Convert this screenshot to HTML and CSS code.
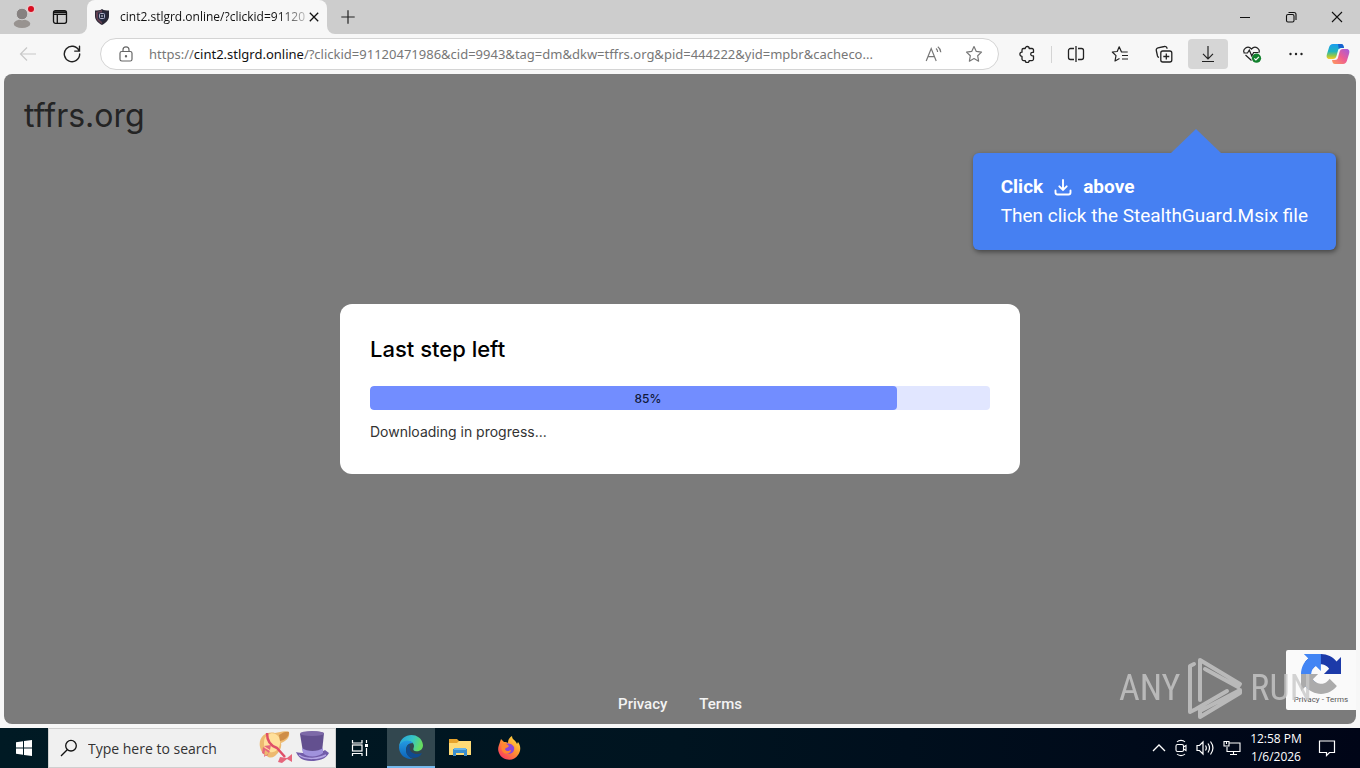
FILE: index.html
```html
<!DOCTYPE html>
<html lang="en">
<head>
<meta charset="utf-8">
<meta name="viewport" content="width=device-width, initial-scale=1">
<title>cint2.stlgrd.online</title>
<link rel="stylesheet" href="styles.css">
</head>
<body class="desktop">
<header class="tabbar">
  <div class="tabbar-tools">
    <button class="icon-button" aria-label="Profile">
      <svg width="28" height="28" viewBox="0 0 28 28"><ellipse cx="14" cy="20.700" rx="8.300" ry="4.300" fill="#989390"/><circle cx="14" cy="11" r="5.800" fill="#868180" stroke="#cdcdcd"/><circle cx="23" cy="6" r="4.500" fill="#e7c9cb"/><circle cx="23" cy="6" r="3" fill="#d80d20"/></svg>
    </button>
    <button class="icon-button" aria-label="Tab actions">
      <svg width="16" height="16" viewBox="0 0 16 16" fill="none" stroke="#111" stroke-width="1.300"><rect x="1.500" y="1.700" width="13" height="12.600" rx="2"/><path d="M1.500 5.300h13M5.300 5v9"/><path d="M2 3.200h12" stroke-width="2"/></svg>
    </button>
  </div>
  <div class="tab">
    <svg class="tab-icon" width="16" height="16" viewBox="0 0 16 16"><path d="M8 0c2 1.500 4.500 1.600 7 1.600V7c0 4-3 7-7 9-4-2-7-5-7-9V1.600C3.500 1.600 6 1.500 8 0z" fill="#292735"/><path d="M2 3l6-2v14C4 13 2 10 2 7z" fill="#634051"/><path d="M4 3.500h8v6L8 13 4 9.500z" fill="#252b43"/><rect x="5.500" y="4.500" width="5" height="5" rx="1" fill="none" stroke="#b0b1c8"/><path d="M8 6v2" stroke="#ddd"/></svg>
    <span class="tab-title">cint2.stlgrd.online/?clickid=91120</span>
    <button class="icon-button tab-close" aria-label="Close tab">
      <svg width="10" height="10" viewBox="0 0 10 10" stroke="#111" stroke-width="1.300"><path d="M.8.8l8.400 8.400M9.200.8L.8 9.200"/></svg>
    </button>
  </div>
  <button class="icon-button new-tab" aria-label="New tab">
    <svg width="14" height="14" viewBox="0 0 14 14" stroke="#222" stroke-width="1.200"><path d="M7 .3v13.400M.3 7h13.400"/></svg>
  </button>
  <div class="window-controls">
    <button class="window-button" aria-label="Minimize"><svg width="12" height="12" viewBox="0 0 12 12" stroke="#111"><path d="M1 6.500h10"/></svg></button>
    <button class="window-button" aria-label="Restore"><svg width="12" height="12" viewBox="0 0 12 12" fill="none" stroke="#111" stroke-width="1.100"><rect x="1.500" y="3.500" width="7.500" height="7.500" rx="1.500"/><path d="M3.500 1.500H9a2 2 0 0 1 2 2V9"/></svg></button>
    <button class="window-button" aria-label="Close"><svg width="12" height="12" viewBox="0 0 12 12" stroke="#111" stroke-width="1.100"><path d="M1 1l10 10M11 1L1 11"/></svg></button>
  </div>
</header>

<nav class="toolbar" aria-label="Browser toolbar">
  <div class="toolbar-nav">
    <button class="icon-button" aria-label="Back" disabled><svg width="18" height="16" viewBox="0 0 18 16" fill="none" stroke="#c8c8c8" stroke-width="1.200"><path d="M17 8H2M8 1.500L1.500 8 8 14.500"/></svg></button>
    <button class="icon-button" aria-label="Refresh"><svg width="18" height="18" viewBox="0 0 18 18" fill="none" stroke="#222" stroke-width="1.400" stroke-linecap="round"><path d="M15.900 5.500A7.700 7.700 0 1 0 16.700 9M16.500 1.300v4.800h-4.800"/></svg></button>
  </div>
  <div class="address">
    <svg class="address-lock" width="14" height="16" viewBox="0 0 14 16" fill="none" stroke="#666" stroke-width="1.200"><rect x="1" y="5.500" width="12" height="9.500" rx="1.800"/><path d="M4 5.500V3.800a3 3 0 0 1 6 0v1.700"/><circle cx="7" cy="10.300" r=".6" fill="#666"/></svg>
    <label class="address-url" for="address">https://<span class="address-host">cint2.stlgrd.online</span>/?clickid=91120471986&amp;cid=9943&amp;tag=dm&amp;dkw=tffrs.org&amp;pid=444222&amp;yid=mpbr&amp;cacheco...</label>
    <input class="address-input" id="address" type="text">
    <button class="icon-button" aria-label="Read aloud"><svg width="18" height="16" viewBox="0 0 18 16" fill="none" stroke="#777" stroke-width="1.200"><path d="M1.200 15L6.200 2.500 11.200 15M2.900 10.700h6.700M11 2.500c1 .8 1.600 2 1.600 3.500M12.800.7c1.800 1.300 2.900 3 3 5.500"/></svg></button>
    <button class="icon-button" aria-label="Add to favorites"><svg width="18" height="18" viewBox="0 0 18 18" fill="none" stroke="#777" stroke-width="1.200" stroke-linejoin="round"><path d="M9 1.500l2.300 4.900 5.200.7-3.800 3.700.9 5.400L9 13.600l-4.600 2.600.9-5.400L1.500 7.100l5.200-.7z"/></svg></button>
  </div>
  <div class="toolbar-actions">
    <button class="tool" aria-label="Extensions"><svg width="18" height="18" viewBox="0 0 18 18" fill="none" stroke="#222" stroke-width="1.300" stroke-linejoin="round"><path d="M7.200 3.500a2 2 0 1 1 4 0H14a1.500 1.500 0 0 1 1.500 1.500v2.300h-1a1.800 1.800 0 0 0 0 3.600h1v3.200A1.500 1.500 0 0 1 14 15.600h-2.800a2 2 0 0 1-4 0H5.500A1.500 1.500 0 0 1 4 14.100v-2.700a2.100 2.100 0 1 1 0-4.200V5a1.500 1.500 0 0 1 1.500-1.500z"/></svg></button>
    <span class="tool-divider"></span>
    <button class="tool" aria-label="Split screen"><svg width="18" height="18" viewBox="0 0 18 18" fill="none" stroke="#222" stroke-width="1.300"><path d="M9 1v16M7 3.500H3.500a2 2 0 0 0-2 2v7a2 2 0 0 0 2 2H7M11 3.500h3.500a2 2 0 0 1 2 2v7a2 2 0 0 1-2 2H11"/></svg></button>
    <button class="tool" aria-label="Favorites"><svg width="18" height="18" viewBox="0 0 18 18" fill="none" stroke="#222" stroke-width="1.200" stroke-linejoin="round"><path d="M16.700 7H10.500L8.200 1.800 6.200 6.500 1.300 7l3.700 3.700-1 5.300 4.500-2.500M11 10.500h6M11 14h6"/></svg></button>
    <button class="tool" aria-label="Collections"><svg width="18" height="18" viewBox="0 0 18 18" fill="none" stroke="#222" stroke-width="1.300"><rect x="5.800" y="6" width="11" height="11" rx="2"/><path d="M11.300 8.500v6M8.300 11.500h6M4 12.500A2.500 2.500 0 0 1 2.500 11L1.300 5.500A2.200 2.200 0 0 1 3 2.800l6.300-1.300A2.200 2.200 0 0 1 12 3.300v.5"/></svg></button>
    <button class="tool tool-active" aria-label="Downloads"><svg width="18" height="18" viewBox="0 0 18 18" fill="none" stroke="#222" stroke-width="1.200"><path d="M9 1v12.500M4 8.800l5 5 5-5M3 16.500h12"/></svg></button>
    <button class="tool" aria-label="Browser essentials"><svg width="20" height="18" viewBox="0 0 20 18" fill="none" stroke="#222" stroke-width="1.200"><path d="M2.300 8C.2 4.600 5.500-.5 9.500 4c4-4.500 9.300.6 7.200 4M3.500 10l6 5.500M1.500 8h4l1.800-3 2.500 6 1.800-3.500H16"/><circle cx="14.500" cy="13.200" r="4.600" fill="#12812d" stroke="none"/><path d="M12.300 13.300l1.600 1.600 3-3" stroke="#fff"/></svg></button>
    <button class="tool" aria-label="Settings and more"><svg width="18" height="18" viewBox="0 0 18 18" fill="#222"><circle cx="3.500" cy="9" r="1.200"/><circle cx="9" cy="9" r="1.200"/><circle cx="14.500" cy="9" r="1.200"/></svg></button>
    <button class="tool tool-copilot" aria-label="Copilot"><svg width="24" height="22" viewBox="0 0 24 22">
      <defs><linearGradient id="cpBlue" x1="0" y1="0" x2="0" y2="1"><stop offset="0" stop-color="#1a9cf0"/><stop offset=".5" stop-color="#22b5bb"/><stop offset=".8" stop-color="#9cc941"/><stop offset="1" stop-color="#ffca2b"/></linearGradient><linearGradient id="cpPink" x1="1" y1="0" x2="0" y2="1"><stop offset="0" stop-color="#a05be0"/><stop offset=".5" stop-color="#ee5d91"/><stop offset="1" stop-color="#ff9c5b"/></linearGradient></defs>
      <path d="M7 1h8c2 0 2.500 1.500 3 4h-3c-2 0-2.600 1-3 2.500L10.500 13c-.6 2-1.500 3-3.500 3H3.500C.5 16 .2 13.500 1 11l2-6.500C3.700 2.200 4.800 1 7 1z" fill="url(#cpBlue)"/><path d="M12 1h3c2 0 2.500 1.500 3 4h-3c-1 0-1.700.3-2.200.9z" fill="#1761cf"/>
      <path d="M17 21H9c-2 0-2.500-1.500-3-4h3c2 0 2.600-1 3-2.500L13.500 9c.6-2 1.500-3 3.500-3h3.500c3 0 3.300 2.500 2.500 5l-2 6.500c-.7 2.300-1.800 3.500-4 3.500z" fill="url(#cpPink)"/></svg></button>
  </div>
</nav>

<main class="viewport">
  <div class="page">
    <h1 class="site-name">tffrs.org</h1>
    <section class="dialog">
      <h2 class="dialog-title">Last step left</h2>
      <div class="progress" role="progressbar" aria-label="Download" aria-valuenow="85" aria-valuemin="0" aria-valuemax="100">
        <div class="progress-fill" style="width:85%">85%</div>
      </div>
      <p class="dialog-status">Downloading in progress...</p>
    </section>
    <footer class="page-footer"><a href="#privacy">Privacy</a><a href="#terms">Terms</a></footer>
    <aside class="callout">
      <p class="callout-head">Click
        <svg width="18" height="18" viewBox="0 0 18 18" fill="none" stroke="#fff" stroke-width="1.900" stroke-linecap="round"><path d="M9 2v9M5.300 8.300L9 12l3.700-3.700M1.500 12.500v2a2 2 0 0 0 2 2h11a2 2 0 0 0 2-2v-2"/></svg>
        above</p>
      <p class="callout-text">Then click the StealthGuard.Msix file</p>
    </aside>
    <aside class="captcha">
      <svg width="40" height="40" viewBox="0 0 64 64"><path d="M64 31.955l-.033-1.370V4.687l-7.160 7.160C50.948 4.674 42.033.093 32.050.093c-10.400 0-19.622 4.960-25.458 12.640l11.736 11.860a15.550 15.550 0 0 1 4.754-5.334c2.050-1.600 4.952-2.906 8.968-2.906.485 0 .86.057 1.135.163 4.976.393 9.288 3.140 11.828 7.124l-8.307 8.307L64 31.953" fill="#1c3aa9"/><path d="M31.862.094l-1.370.033H4.594l7.160 7.160C4.580 13.147 0 22.060 0 32.046c0 10.400 4.960 19.622 12.640 25.458L24.500 45.768a15.550 15.550 0 0 1-5.334-4.754c-1.600-2.050-2.906-4.952-2.906-8.968 0-.485.057-.86.163-1.135.393-4.976 3.140-9.288 7.124-11.828l8.307 8.307L31.860.095" fill="#4285f4"/><path d="M.001 32.045l.033 1.370v25.898l7.160-7.160c5.860 7.173 14.774 11.754 24.760 11.754 10.400 0 19.622-4.960 25.458-12.640l-11.736-11.860a15.550 15.550 0 0 1-4.754 5.334c-2.050 1.600-4.952 2.906-8.968 2.906-.485 0-.86-.057-1.135-.163-4.976-.393-9.288-3.140-11.828-7.124l8.307-8.307c-10.522.04-22.400.066-27.295-.005" fill="#ababab"/></svg>
      <p class="captcha-links"><a href="#rc-privacy">Privacy</a> - <a href="#rc-terms">Terms</a></p>
    </aside>
    <div class="watermark">
      <span>ANY</span>
      <svg width="56" height="64" viewBox="0 0 56 64" fill="none" stroke="currentColor" stroke-width="4" stroke-linejoin="round" stroke-linecap="round"><path d="M7 8l-4 2v46l6-3 31-18M13 44V4l40 24-2 3-33-18M53 34L13 55v6l40-24z"/></svg>
      <span>RUN</span>
    </div>
  </div>
</main>

<footer class="taskbar">
  <button class="task-button" aria-label="Start"><svg width="16" height="16" viewBox="0 0 16 16" fill="#fff"><path d="M0 2.200l7-1v6.300H0zM8 1l8-1v7.500H8zM0 8.500h7v6.300l-7-1zM8 8.500h8V16l-8-1z"/></svg></button>
  <label class="search" for="search">
    <svg width="18" height="18" viewBox="0 0 18 18" fill="none" stroke="#111" stroke-width="1.300"><circle cx="11" cy="6.700" r="5.300"/><path d="M7.200 10.700L1 17"/></svg>
    <input class="search-input" id="search" type="text" placeholder="Type here to search" aria-label="Search">
    <svg width="70" height="36" viewBox="0 0 70 36">
      <path d="M1 17C-1 7 7 1 16 3c5-1 10-3 14-1 1 5-2 9-8 11 1 4-1 9-6 13-3 2-6 2-8 0-4-1-6-5-7-9z" fill="#edba70"/><path d="M9 5c5-4 11 0 12 5s-2 11-7 12-9-2-9-8 1-7 4-9z" fill="#ffe09b"/><path d="M20 5c4-3 8-4 10-3 0 5-4 8-9 9z" fill="#cf8e48"/><path d="M8 3c0 8 4 13 10 15l8 9" fill="none" stroke="#df4f68" stroke-width="2.500"/><path d="M4 17l7 4-3 5-5-3zM11 20l-6-4 7-1zM21 27l7 1 5-4v8l-5-3-5 4-4-1zM6 20l-1 7 5-4z" fill="#e6667c"/>
      <path d="M37 22c6 2 25 1 29-2l4 3c-3 6-10 8-18 8-9 0-13-4-15-9z" fill="#725ca9"/><path d="M41 4c5-3 18-3 24-1l-2 19c-6 5-15 5-19 0z" fill="#63508f"/><path d="M43 18c5 4 16 4 21 0v5c-6 5-17 4-20 0z" fill="#a092dc"/><ellipse cx="53" cy="3.500" rx="12" ry="2.500" fill="#7d69a8"/><path d="M40 25c7 5 20 4 27 0" fill="none" stroke="#b3a4e4" stroke-width="1.500"/>
    </svg>
  </label>
  <button class="task-button" aria-label="Task view"><svg width="18" height="18" viewBox="0 0 18 18" fill="none" stroke="#fff" stroke-width="1.200"><path d="M1.500 1v3h9.500V1M1.500 17v-2.500H11V17M15.500 1v3M15.500 9v8"/><rect x="1.500" y="6" width="9.500" height="6"/><path d="M14 6.500h3" stroke-width="3"/></svg></button>
  <button class="task-button task-active" aria-label="Microsoft Edge"><svg width="24" height="24" viewBox="0 0 24 24">
    <defs><linearGradient id="eg" x1="0" y1="0" x2="1" y2=".3"><stop offset="0" stop-color="#259ee0"/><stop offset=".6" stop-color="#37c6c5"/><stop offset="1" stop-color="#65dc61"/></linearGradient><linearGradient id="eb" x1="0" y1="0" x2="0" y2="1"><stop offset="0" stop-color="#249be3"/><stop offset="1" stop-color="#0c62b8"/></linearGradient></defs>
    <path d="M0 12C1-3 22-4 24 10c0 5-4 7-8 6-3-1-1-3-1-5 0-6-11-7-15 1z" fill="url(#eg)"/><path d="M0 12c1-6 10-9 14-4-5 0-7 3-7 7 0 5 4 8 7 9C6 25 0 19 0 12z" fill="url(#eb)"/><path d="M10 9c-6 6-2 17 9 13 2-1 3-2 4-4-7 3-14-1-12-7z" fill="#104b8f"/></svg></button>
  <button class="task-button" aria-label="File Explorer"><svg width="22" height="20" viewBox="0 0 22 20"><path d="M0 1h8l2 2h12v5H0z" fill="#e7a32b"/><path d="M0 5h8l2-2h12v14H0z" fill="#ffdb76"/><path d="M4 11h14v7h-3v-3H7v3H4z" fill="#3c8fcd"/><path d="M5 10h12v2H5z" fill="#65b3e8"/></svg></button>
  <button class="task-button" aria-label="Firefox"><svg width="24" height="24" viewBox="0 0 24 24">
    <defs><linearGradient id="ff" x1="1" y1="0" x2=".2" y2="1"><stop offset="0" stop-color="#fff04a"/><stop offset=".5" stop-color="#ff962f"/><stop offset="1" stop-color="#fb3562"/></linearGradient></defs>
    <path d="M3 6l1-3 3 3c2 0 3 0 4 1 0-4 2-6 4-7 0 4 4 4 5 8l1-2c3 4 3 9 0 13C17 26 5 25 2 17c-2-4 0-8 1-11z" fill="url(#ff)"/><path d="M8 8c2-1 7-1 9 3 1 4-2 7-5 7-4 0-6-3-5-6l4-1z" fill="#8a46d8"/><path d="M5 8c3-1 5 0 7 2-1 2-3 1-4 3 1 3 4 2 6 1 0 3-4 5-7 3-3-2-3-6-2-9z" fill="#ff8531"/></svg></button>
  <div class="tray">
    <button class="icon-button" aria-label="Show hidden icons"><svg width="14" height="8" viewBox="0 0 14 8" fill="none" stroke="#fff" stroke-width="1.300"><path d="M1 7l6-6 6 6"/></svg></button>
    <button class="icon-button" aria-label="Meet now"><svg width="12" height="18" viewBox="0 0 12 18" fill="none" stroke="#fff" stroke-width="1.100"><rect x="1" y="5.500" width="7.500" height="7" rx="1.500"/><path d="M8.500 8l2.500-1.500v5L8.500 10M2 3c2-2.200 6-2.200 8 0M2 15c2 2.200 6 2.200 8 0"/></svg></button>
    <button class="icon-button" aria-label="Volume"><svg width="18" height="16" viewBox="0 0 18 16" fill="none" stroke="#fff" stroke-width="1.200"><path d="M1 5.500h2.500L7 2v12l-3.500-3.500H1zM9.500 5.500c1 1.500 1 3.500 0 5M12 3.500c2 3 2 6 0 9M14.500 1.500c3 4 3 9 0 13"/></svg></button>
    <button class="icon-button" aria-label="Network"><svg width="18" height="16" viewBox="0 0 18 16" fill="none" stroke="#fff" stroke-width="1.100"><path d="M6 3h11v8.500H4V7M10.500 11.500v3M7 14.500h7"/><path d="M1 1.500h5V6H1zM3.500 1v3"/></svg></button>
  </div>
  <time class="clock" datetime="2026-01-06T12:58"><span>12:58 PM</span><span>1/6/2026</span></time>
  <button class="icon-button notifications" aria-label="Notifications"><svg width="18" height="18" viewBox="0 0 18 18" fill="none" stroke="#fff" stroke-width="1.200"><path d="M1.500 2h15v11.500h-5L8.500 16.500v-3h-7z"/></svg></button>
</footer>
</body>
</html>
```
FILE: styles.css
```css
* { box-sizing: border-box; }
body, h1, h2, p { margin: 0; }
button { border: 0; padding: 0; background: none; font: inherit; color: inherit; }
svg { display: block; flex: none; }
a { color: inherit; text-decoration: none; }

.desktop {
  display: grid;
  grid-template-rows: auto auto 1fr auto;
  min-height: 100vh;
  background: #f7f7f7;
  font-family: "Open Sans", "Noto Sans", sans-serif;
}
.icon-button { display: flex; align-items: center; justify-content: center; flex: none; }

.tabbar { display: flex; align-items: stretch; height: 34px; background: #f7f7f7; }
.tabbar-tools { display: flex; align-items: center; gap: 16px; width: 87px; padding-left: 8px; background: #cdcdcd; border-bottom-right-radius: 8px; }
.tab { position: relative; display: flex; align-items: center; width: 240px; padding: 0 10px 0 7px; background: #f7f7f7; border-radius: 8px 8px 0 0; box-shadow: 0 -8px 0 8px #cdcdcd; clip-path: inset(0); }
.tab-title {
  flex: 1;
  margin-left: 10px;
  white-space: nowrap;
  font-size: 12px;
  line-height: 20px;
  color: #111;
  -webkit-mask-image: linear-gradient(90deg, #000 86%, rgba(0, 0, 0, .25));
  mask-image: linear-gradient(90deg, #000 86%, rgba(0, 0, 0, .25));
}
.tab-close { margin-left: 4px; }
.new-tab { width: 42px; background: #cdcdcd; border-bottom-left-radius: 8px; }
.window-controls { display: flex; flex: 1; justify-content: flex-end; background: #cdcdcd; }
.window-button { display: flex; align-items: center; justify-content: center; width: 46px; }

.toolbar { display: flex; align-items: center; height: 40px; padding-right: 4px; }
.toolbar-nav { display: flex; align-items: center; gap: 26px; width: 100px; padding-left: 19px; }
.address {
  position: relative;
  display: flex;
  align-items: center;
  flex: 1;
  min-width: 0;
  height: 32px;
  padding: 0 15px 0 18px;
  gap: 22px;
  background: #fff;
  border: 1px solid #d4d4d4;
  border-radius: 16px;
}
.address-url { flex: 1; min-width: 0; margin-left: -6px; overflow: hidden; white-space: nowrap; font-family: "Noto Sans", "Open Sans", sans-serif; font-size: 13px; line-height: 20px; color: #777; }
.address-host { color: #111; }
.address-input { position: absolute; inset: 0; width: 100%; border: 0; border-radius: 16px; background: transparent; }
.toolbar-actions { display: flex; align-items: center; gap: 4px; padding-left: 8px; }
.tool { display: flex; align-items: center; justify-content: center; width: 40px; height: 30px; border-radius: 4px; }
.tool-active { background: #d6d6d6; }
.tool-copilot { width: 36px; }
.tool-divider { width: 1px; height: 17px; background: #d4d4d4; }

.viewport { display: flex; padding: 0 4px 4px; }
.page {
  position: relative;
  display: grid;
  grid-template-rows: 1fr auto 1fr;
  flex: 1;
  background: #7b7b7b;
  border-radius: 8px;
  overflow: hidden;
  font-family: Inter, sans-serif;
}
.site-name { padding: 20px; font-size: 32px; line-height: 44px; font-weight: 400; color: #242424; }
.dialog { width: 50%; min-width: 680px; margin: 0 auto 20px; padding: 30px; background: #fff; border-radius: 12px; }
.dialog-title { font-size: 22px; line-height: 30px; font-weight: 500; color: #000; }
.progress { height: 24px; margin-top: 22px; background: #e1e6ff; border-radius: 4px; overflow: hidden; }
.progress-fill { height: 24px; padding-left: 29px; background: #728dff; border-radius: 4px; text-align: center; font-size: 12px; line-height: 25px; font-weight: 500; color: #10183a; }
.dialog-status { margin-top: 11px; padding-bottom: 1px; font-size: 14px; line-height: 22px; color: #333; }
.page-footer { display: flex; align-items: flex-end; justify-content: center; gap: 32px; padding-bottom: 10px; font-family: Roboto, sans-serif; font-size: 15px; line-height: 20px; font-weight: 500; color: #f3f3f3; }

.callout {
  position: absolute;
  top: 79px;
  right: 20px;
  padding: 19px 28px 20px;
  background: #4680f2;
  border-radius: 6px;
  box-shadow: 1px 2px 5px rgba(0, 0, 0, .45);
  color: #fff;
  font-family: Roboto, sans-serif;
  font-size: 19px;
  line-height: 29px;
}
.callout::before {
  content: "";
  position: absolute;
  right: 115px;
  bottom: 100%;
  border: 25px solid transparent;
  border-top: 0;
  border-bottom: 24px solid #4680f2;
}
.callout-head { display: flex; align-items: center; gap: 11px; font-weight: 700; }
.captcha {
  position: absolute;
  right: 0;
  bottom: 14px;
  display: flex;
  flex-direction: column;
  align-items: center;
  width: 70px;
  padding: 4px 0;
  background: #fafafa;
  border-radius: 2px 0 0 2px;
  color: #555;
  font-family: Roboto, sans-serif;
  font-size: 8px;
  line-height: 12px;
}
.watermark {
  position: absolute;
  right: 44px;
  bottom: 4px;
  display: flex;
  align-items: center;
  gap: 7px;
  color: #c9c9c9;
  opacity: .8;
  font-family: "Roboto Condensed", "Liberation Sans Narrow", Roboto, sans-serif;
  font-size: 36px;
  line-height: 64px;
  pointer-events: none;
}

.taskbar { display: flex; align-items: stretch; height: 40px; padding-right: 24px; background: linear-gradient(90deg, #001a24, #001420 50%, #000517); color: #fff; }
.task-button { display: flex; align-items: center; justify-content: center; width: 48px; margin-right: 1px; }
.task-button:first-child { margin-right: 0; }
.task-active { margin-left: 2px; background: #32474f; border-bottom: 2px solid #76b9ed; }
.search { display: flex; align-items: center; width: 288px; padding: 0 6px 0 11px; background: #f0f0f0; border: 1px solid #cfcfcf; }
.search-input { flex: 1; min-width: 0; padding: 0 0 0 10px; border: 0; background: transparent; font-family: inherit; font-size: 14px; color: #333; }
.search-input::placeholder { color: #333; opacity: 1; }
.tray { display: flex; align-items: center; gap: 9px; margin-left: auto; }
.clock { display: flex; flex-direction: column; justify-content: center; width: 70px; text-align: center; font-size: 12px; line-height: 18px; }
.notifications { margin-left: 7px; }
```
